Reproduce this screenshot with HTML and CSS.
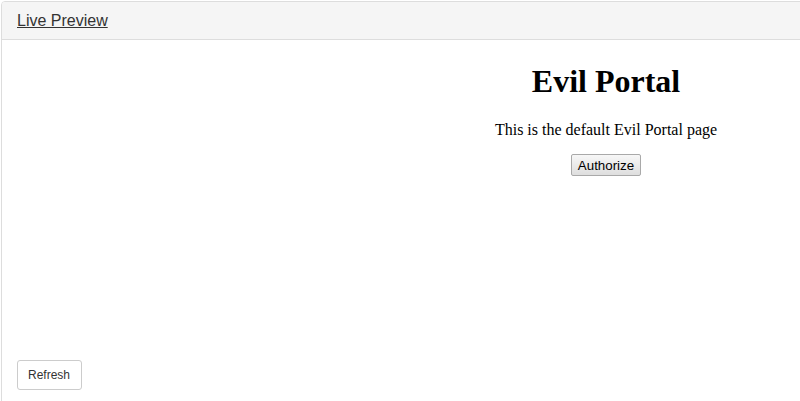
FILE: index.html
```html
<!DOCTYPE html>
<html>
<head>
<meta charset="utf-8">
<link rel="stylesheet" href="styles.css">
</head>
<body>
<div class="panel">
  <div class="panel-heading">
    <a class="panel-title" href="#">Live Preview</a>
  </div>
  <div class="panel-body">
    <div class="preview">
      <div class="portal">
        <h1>Evil Portal</h1>
        <p>This is the default Evil Portal page</p>
        <button class="authorize" type="button">Authorize</button>
      </div>
    </div>
    <button class="btn-refresh" type="button">Refresh</button>
  </div>
</div>
</body>
</html>
```

FILE: styles.css
```css
html, body {
  margin: 0;
  padding: 0;
  overflow: hidden;
  background: #fff;
}
body {
  font-family: "Liberation Sans", Arial, sans-serif;
  font-size: 14px;
  color: #333;
}
.panel {
  margin: 1px 0 0 1px;
  width: 830px;
  border: 1px solid #ddd;
  border-radius: 4px;
  background: #fff;
}
.panel-heading {
  background: #f5f5f5;
  border-bottom: 1px solid #ddd;
  border-radius: 3px 3px 0 0;
  padding: 10px 15px;
  line-height: 17px;
  height: 17px;
}
.panel-title {
  font-size: 16px;
  color: #333;
  text-decoration: underline;
}
.panel-body {
  padding: 15px;
}
.preview {
  height: 305px;
}
.portal {
  margin-left: 394px;
  width: 390px;
  text-align: center;
  font-family: "Liberation Serif", "Times New Roman", serif;
  color: #000;
  padding-top: 1px;
}
.portal h1 {
  font-size: 32px;
  font-weight: bold;
  margin: 7px 0 21px;
}
.portal p {
  font-size: 16px;
  margin: 0 0 15px;
}
.authorize {
  font-family: "Liberation Sans", Arial, sans-serif;
  font-size: 13.33px;
  color: #000;
  padding: 1px 6px;
  height: 22px;
  border: 1px solid #a9a9a9;
  border-radius: 2px;
  background: linear-gradient(#f7f7f7, #dedede);
}
.btn-refresh {
  font-family: "Liberation Sans", Arial, sans-serif;
  font-size: 12px;
  line-height: 1.5;
  padding: 5px 11px 5px 10px;
  color: #333;
  background: #fff;
  border: 1px solid #ccc;
  border-radius: 3px;
}
```
